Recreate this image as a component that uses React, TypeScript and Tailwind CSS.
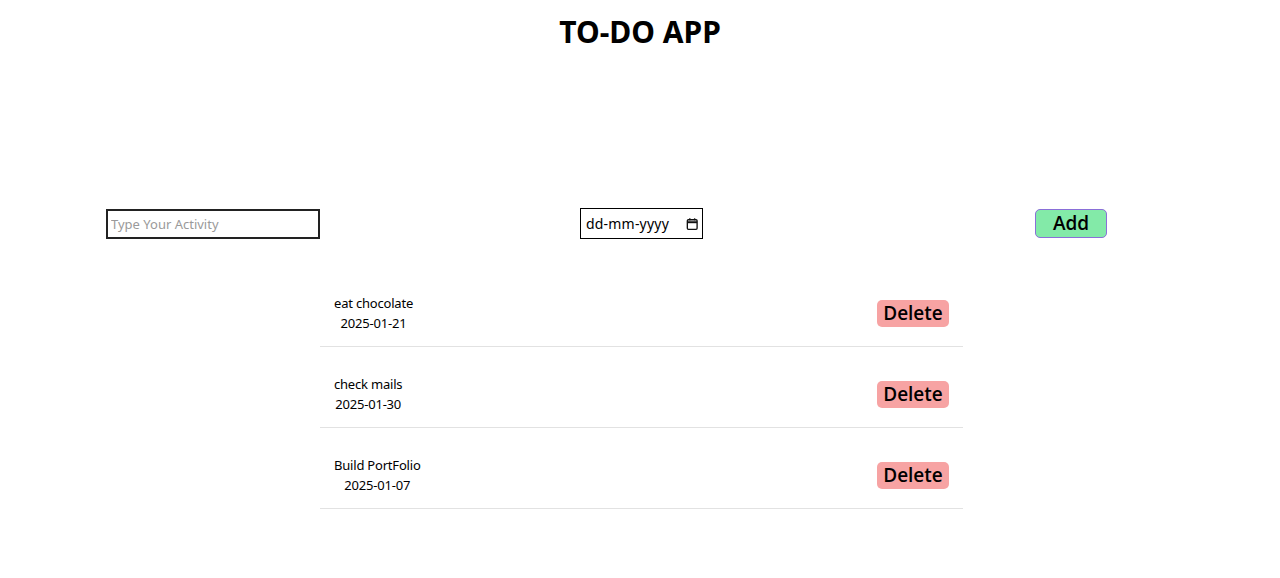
import { useState } from 'react';

interface Todo {
  id: number;
  name: string;
  date: string;
}

const initialTodos: Todo[] = [
  { id: 1, name: 'eat chocolate', date: '2025-01-21' },
  { id: 2, name: 'check mails', date: '2025-01-30' },
  { id: 3, name: 'Build PortFolio', date: '2025-01-07' },
];

const CalendarIcon = () => (
  <svg width="14" height="14" viewBox="0 0 14 14" fill="none" stroke="#111" strokeWidth="1.5">
    <rect x="1.5" y="2.2" width="11" height="10.8" rx="1.2" />
    <line x1="1.5" y1="5" x2="12.5" y2="5" strokeWidth="2.2" />
    <line x1="4.3" y1="0.6" x2="4.3" y2="2.8" />
    <line x1="9.7" y1="0.6" x2="9.7" y2="2.8" />
  </svg>
);

const App = () => {
  const [todos, setTodos] = useState<Todo[]>(initialTodos);
  const [name, setName] = useState('');
  const [date, setDate] = useState('');

  const addTodo = () => {
    if (!name) return;
    setTodos([...todos, { id: Date.now(), name, date }]);
    setName('');
    setDate('');
  };

  return (
    <div className="min-h-screen bg-white text-black font-['Noto_Sans','Open_Sans',sans-serif]">
      <h1 className="pt-[12px] text-center text-[30px] font-bold leading-[40px]">TO-DO APP</h1>

      <div className="mt-[156px] flex items-center">
        <div className="ml-[106px] w-[214px]">
          <input
            className="h-[30px] w-full border-2 border-[#222] px-[3px] text-[13px] outline-none placeholder:text-[#9a9a9a]"
            placeholder="Type Your Activity"
            value={name}
            onChange={(event) => setName(event.target.value)}
          />
        </div>
        <div className="ml-[260px] flex h-[31px] w-[123px] items-center border border-black pl-[5px] pr-[4px]">
          <input
            className="w-full min-w-0 text-[14px] tracking-[0.2px] outline-none placeholder:text-black"
            placeholder="dd-mm-yyyy"
            value={date}
            onChange={(event) => setDate(event.target.value)}
          />
          <CalendarIcon />
        </div>
        <div className="ml-[332px]">
          <button
            className="h-[29px] w-[72px] rounded-[5px] border border-[#8a6fd8] bg-[#83eaa8] font-['Open_Sans',sans-serif] text-[19px] font-semibold leading-none"
            onClick={addTodo}
          >
            Add
          </button>
        </div>
      </div>

      <div className="ml-[320px] mt-[27px] w-[643px]">
        {todos.map((todo) => (
          <div
            key={todo.id}
            className="flex h-[81px] items-center justify-between border-b border-[#e2e2e2] pb-[13px] pl-[14px] pr-[14px] pt-[27px]"
          >
            <div className="flex flex-col items-center text-[13px] tracking-[-0.2px] leading-[20px]">
              <span>{todo.name}</span>
              <span>{todo.date}</span>
            </div>
            <button
              className="h-[27px] w-[72px] rounded-[5px] bg-[#f7a3a3] font-['Open_Sans',sans-serif] text-[19px] font-semibold leading-none"
              onClick={() => setTodos(todos.filter((item) => item.id !== todo.id))}
            >
              Delete
            </button>
          </div>
        ))}
      </div>
    </div>
  );
};

export default App;
